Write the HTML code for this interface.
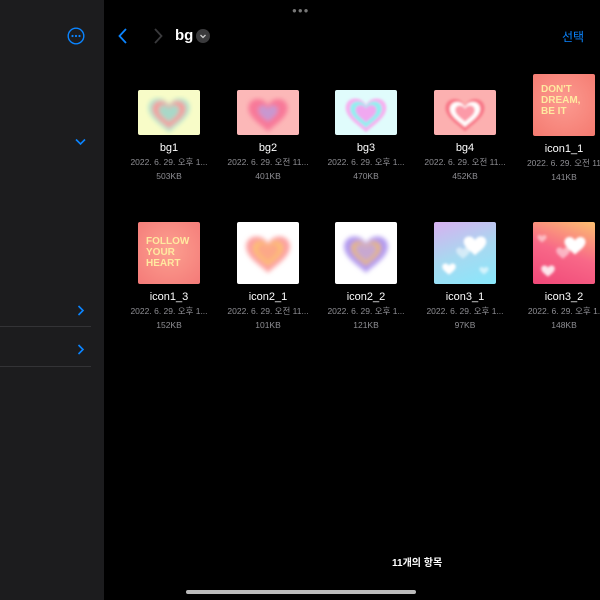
<!DOCTYPE html><html><head><meta charset="utf-8"><style>
*{margin:0;padding:0;box-sizing:border-box}
body{width:600px;height:600px;background:#000;position:relative;overflow:hidden;font-family:"Liberation Sans","Noto Sans CJK KR",sans-serif;color:#fff}
.side{position:absolute;left:0;top:0;width:104px;height:600px;background:#1c1c1e}
.line{position:absolute;left:0;width:91px;height:1px;background:#333336}
.it{position:absolute;width:100px;text-align:center}
.th{margin:0 auto;width:62px;border-radius:2px;overflow:hidden;position:relative}
.th svg{display:block}
.n{font-size:11px;color:#fff;margin-top:7px;line-height:13px}
.d{font-size:8.5px;color:#8e8e93;line-height:14px;white-space:nowrap;overflow:hidden}
.s{font-size:8.5px;color:#8e8e93;line-height:14px}
.tx{position:absolute;left:8px;top:10px;font-weight:bold;font-size:10px;line-height:11px;color:#ffe9a0;text-align:left}
</style></head><body>
<svg width="0" height="0" style="position:absolute"><defs>
<path id="h" d="M0,-5 C-4,-13 -16,-11 -15,-2 C-14,5 -5,10 0,15 C5,10 14,5 15,-2 C16,-11 4,-13 0,-5Z"/>
<filter id="b3"><feGaussianBlur stdDeviation="2.5"/></filter>
<filter id="b1"><feGaussianBlur stdDeviation="1.2"/></filter>
</defs></svg>
<div class="side">
<svg style="position:absolute;left:67px;top:27px" width="18" height="18"><circle cx="9" cy="9" r="7.8" fill="none" stroke="#0a84ff" stroke-width="1.4"/><circle cx="5.5" cy="9" r="1.1" fill="#0a84ff"/><circle cx="9" cy="9" r="1.1" fill="#0a84ff"/><circle cx="12.5" cy="9" r="1.1" fill="#0a84ff"/></svg>
<svg style="position:absolute;left:75px;top:138px" width="11" height="8"><path d="M1 1.5L5.5 6 10 1.5" fill="none" stroke="#0a84ff" stroke-width="1.6"/></svg>
<svg style="position:absolute;left:77px;top:305px" width="8" height="11"><path d="M1.5 1L6 5.5 1.5 10" fill="none" stroke="#0a84ff" stroke-width="1.6"/></svg>
<div class="line" style="top:326px"></div>
<svg style="position:absolute;left:77px;top:344px" width="8" height="11"><path d="M1.5 1L6 5.5 1.5 10" fill="none" stroke="#0a84ff" stroke-width="1.6"/></svg>
<div class="line" style="top:366px"></div>
</div>
<div style="position:absolute;left:292px;top:6px;font-size:8px;color:#777;letter-spacing:1px">●●●</div>
<svg style="position:absolute;left:117px;top:27px" width="12" height="18"><path d="M9 2L2.5 9 9 16" fill="none" stroke="#0a84ff" stroke-width="1.8"/></svg>
<svg style="position:absolute;left:152px;top:27px" width="12" height="18"><path d="M3 2L9.5 9 3 16" fill="none" stroke="#3a3a3c" stroke-width="1.8"/></svg>
<div style="position:absolute;left:175px;top:27px;font-size:15px;font-weight:bold">bg</div>
<div style="position:absolute;left:196px;top:29px;width:14px;height:14px;border-radius:7px;background:#3a3a3c"><svg width="14" height="14"><path d="M4.5 6L7 8.5 9.5 6" fill="none" stroke="#ccc" stroke-width="1.3"/></svg></div>
<div style="position:absolute;left:562px;top:28px;font-size:12px;color:#0a84ff">선택</div>

<div class="it" style="left:119px;top:90px"><div class="th" style="height:45px;background:#f8fcc8"><svg width="62" height="45"><g transform="translate(31,22)" filter="url(#b3)"><use href="#h" transform="scale(1.35)" fill="#a8e0d0"/><use href="#h" transform="scale(1.1)" fill="#f89a9a"/><use href="#h" transform="scale(0.7)" fill="#a8d8c8"/></g></svg></div><div class="n">bg1</div><div class="d">2022. 6. 29. 오후 1...</div><div class="s">503KB</div></div>
<div class="it" style="left:218px;top:90px"><div class="th" style="height:45px;background:#fcb8b8"><svg width="62" height="45"><g transform="translate(31,22)" filter="url(#b3)"><use href="#h" transform="scale(1.3)" fill="#f87898"/><use href="#h" transform="scale(0.65)" fill="#c898d0"/></g></svg></div><div class="n">bg2</div><div class="d">2022. 6. 29. 오전 11...</div><div class="s">401KB</div></div>
<div class="it" style="left:316px;top:90px"><div class="th" style="height:45px;background:#e0fcfc"><svg width="62" height="45"><g transform="translate(31,22)" filter="url(#b1)"><use href="#h" transform="scale(1.35)" fill="#f8b0f0"/><use href="#h" transform="scale(1.05)" fill="#90f0f0"/><use href="#h" transform="scale(0.7)" fill="#f0a8f0"/></g></svg></div><div class="n">bg3</div><div class="d">2022. 6. 29. 오후 1...</div><div class="s">470KB</div></div>
<div class="it" style="left:415px;top:90px"><div class="th" style="height:45px;background:#fcb0b0"><svg width="62" height="45"><g transform="translate(31,22)" filter="url(#b1)"><use href="#h" transform="scale(1.3)" fill="#f87888"/><use href="#h" transform="scale(1.0)" fill="#fff"/><use href="#h" transform="scale(0.65)" fill="#fc9aa8"/></g></svg></div><div class="n">bg4</div><div class="d">2022. 6. 29. 오전 11...</div><div class="s">452KB</div></div>
<div class="it" style="left:514px;top:74px"><div class="th" style="height:62px;background:radial-gradient(circle at 50% 45%,#fc9a90,#f47a70)"><div class="tx">DON'T<br>DREAM,<br>BE IT</div></div><div class="n">icon1_1</div><div class="d">2022. 6. 29. 오전 11</div><div class="s">141KB</div></div>

<div class="it" style="left:119px;top:222px"><div class="th" style="height:62px;background:radial-gradient(circle at 50% 45%,#fca090,#f47a78)"><div class="tx" style="top:14px">FOLLOW<br>YOUR<br>HEART</div></div><div class="n">icon1_3</div><div class="d">2022. 6. 29. 오후 1...</div><div class="s">152KB</div></div>
<div class="it" style="left:218px;top:222px"><div class="th" style="height:62px;background:#fff"><svg width="62" height="62"><g transform="translate(31,29)" filter="url(#b3)"><use href="#h" transform="scale(1.45)" fill="#fca0a0"/><use href="#h" transform="scale(1.0)" fill="#fcc070"/><use href="#h" transform="scale(0.7)" fill="#fca888"/></g></svg></div><div class="n">icon2_1</div><div class="d">2022. 6. 29. 오전 11...</div><div class="s">101KB</div></div>
<div class="it" style="left:316px;top:222px"><div class="th" style="height:62px;background:#fff"><svg width="62" height="62"><g transform="translate(31,29)" filter="url(#b3)"><use href="#h" transform="scale(1.45)" fill="#b098f0"/><use href="#h" transform="scale(1.0)" fill="#e8b870"/><use href="#h" transform="scale(0.7)" fill="#c8a8d0"/></g></svg></div><div class="n">icon2_2</div><div class="d">2022. 6. 29. 오후 1...</div><div class="s">121KB</div></div>
<div class="it" style="left:415px;top:222px"><div class="th" style="height:62px;background:linear-gradient(160deg,#d8b0f0,#a8d8f0 50%,#88e8fc)"><svg width="62" height="62"><g filter="url(#b1)" fill="#fff"><use href="#h" transform="translate(41,22) scale(0.75)"/><use href="#h" transform="translate(29,30) scale(0.45)" opacity=".5"/><use href="#h" transform="translate(15,46) scale(0.45)"/><use href="#h" transform="translate(50,48) scale(0.3)" opacity=".6"/></g></svg></div><div class="n">icon3_1</div><div class="d">2022. 6. 29. 오후 1...</div><div class="s">97KB</div></div>
<div class="it" style="left:514px;top:222px"><div class="th" style="height:62px;background:linear-gradient(200deg,#fcc070,#f86888 50%,#f04878)"><svg width="62" height="62"><g filter="url(#b1)" fill="#fff"><use href="#h" transform="translate(42,22) scale(0.7)"/><use href="#h" transform="translate(30,30) scale(0.45)" opacity=".5"/><use href="#h" transform="translate(15,48) scale(0.45)" opacity=".85"/><use href="#h" transform="translate(9,16) scale(0.3)" opacity=".5"/></g></svg></div><div class="n">icon3_2</div><div class="d">2022. 6. 29. 오후 1.</div><div class="s">148KB</div></div>

<div style="position:absolute;left:392px;top:554px;font-size:10px;font-weight:bold">11개의 항목</div>
<div style="position:absolute;left:186px;top:590px;width:230px;height:4px;border-radius:2px;background:#bbb"></div>
</body></html>
